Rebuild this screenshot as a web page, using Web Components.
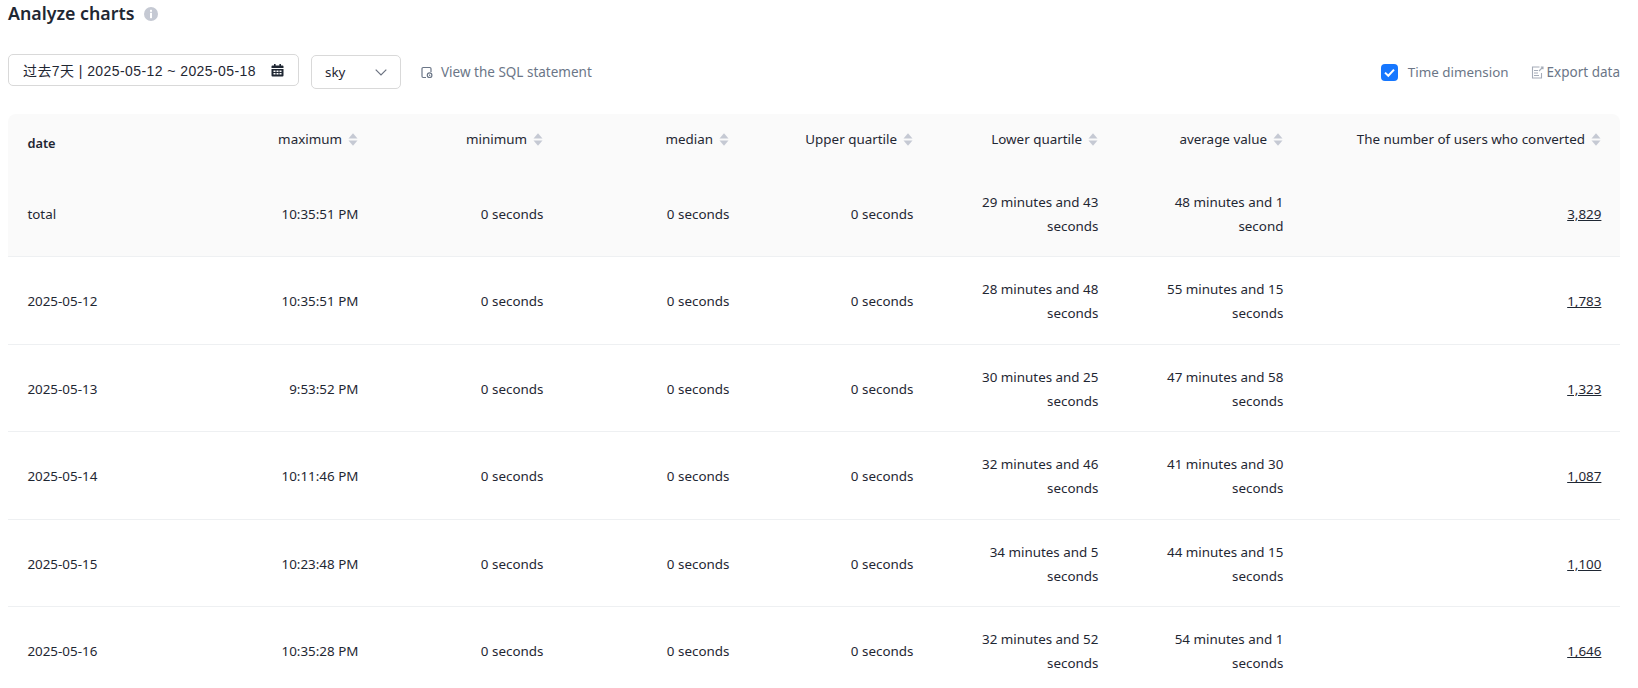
<!DOCTYPE html>
<html><head><meta charset="utf-8"><style>
html,body{margin:0;height:688px;overflow:hidden;background:#fff}
body{font-family:"Noto Sans","Noto Sans CJK SC",sans-serif}
</style></head><body>
<x-page></x-page>
<script>
const sortIcon=`<svg width="10" height="13" viewBox="0 0 10 13"><path d="M5 0.3 9.5 5.6H.5z" fill="#c5c9d3"/><path d="M5 12.7.5 7.4h9z" fill="#c5c9d3"/></svg>`;
const F='13.4px/24px "Noto Sans",sans-serif';
class XTitle extends HTMLElement{constructor(){super();this.attachShadow({mode:'open'}).innerHTML=`<style>
:host{display:flex;align-items:center;gap:10px;height:27px;font:600 17.8px/27px "Noto Sans",sans-serif;color:#1f2733}
svg{display:block;margin-top:1px}</style><slot></slot>
<svg width="14" height="14" viewBox="0 0 14 14"><circle cx="7" cy="7" r="7" fill="#c5c9d3"/><rect x="6" y="2.8" width="2" height="2" fill="#fff"/><rect x="6" y="5.8" width="2" height="5.4" fill="#fff"/></svg>`}}
customElements.define('x-title',XTitle);
class XDate extends HTMLElement{constructor(){super();this.attachShadow({mode:'open'}).innerHTML=`<style>
:host{display:flex;align-items:center;box-sizing:border-box;width:291px;height:32px;padding:0 14px;border:1px solid #d9d9d9;border-radius:5px;font:14px "Liberation Sans","Noto Sans CJK SC",sans-serif;letter-spacing:.42px;color:#1f2733;justify-content:space-between;align-self:flex-start;margin-top:-1px}
svg{display:block;}</style><span><slot></slot></span>
<svg width="13" height="13" viewBox="0 0 13 13" fill="#1f2733"><path d="M3 0h1.6v1.5h3.8V0H10v1.5h1.5A1 1 0 0 1 12.5 2.5V4H.5V2.5a1 1 0 0 1 1-1H3z"/><path fill-rule="evenodd" d="M.5 5h12v6.5a1 1 0 0 1-1 1h-10a1 1 0 0 1-1-1zM2.5 6.5v1.5h2V6.5zm3 0v1.5h2V6.5zm3 0v1.5h2V6.5zM2.5 9v1.5h2V9zm3 0v1.5h2V9zm3 0v1.5h2V9z"/></svg>`}}
customElements.define('x-date',XDate);
class XSelect extends HTMLElement{constructor(){super();this.attachShadow({mode:'open'}).innerHTML=`<style>
:host{display:flex;align-items:center;justify-content:space-between;box-sizing:border-box;width:90px;height:34px;padding:0 13px;border:1px solid #d9d9d9;border-radius:5px;font:${F};color:#1f2733}
svg{display:block}</style><slot></slot>
<svg width="12" height="7" viewBox="0 0 12 7" fill="none" stroke="#6b7280" stroke-width="1.2"><path d="M.7.7 6 6 11.3.7"/></svg>`}}
customElements.define('x-select',XSelect);
class XLink extends HTMLElement{constructor(){super();this.attachShadow({mode:'open'}).innerHTML=`<style>
:host{display:flex;align-items:center;gap:var(--g,8px);font:13.5px/24px "Noto Sans",sans-serif;color:#6b7687}
::slotted(svg){display:block}</style><slot name="icon"></slot><slot></slot>`}}
customElements.define('x-link',XLink);
class XCheck extends HTMLElement{constructor(){super();this.attachShadow({mode:'open'}).innerHTML=`<style>
:host{display:flex;align-items:center;gap:10px;font:${F};color:#6b7687}
i{display:block;width:17px;height:17px;border-radius:4px;background:#1677ff}svg{display:block}</style>
<i><svg width="17" height="17" viewBox="0 0 17 17" fill="none" stroke="#fff" stroke-width="2"><path d="M4 8.6 7.3 11.8 13 5.6"/></svg></i><slot></slot>`}}
customElements.define('x-check',XCheck);
class XToolbar extends HTMLElement{constructor(){super();this.attachShadow({mode:'open'}).innerHTML=`<style>
:host{display:flex;align-items:center;justify-content:space-between;margin-top:28px;height:34px}
div{display:flex;align-items:center}
.l{gap:12px;height:34px}.r{gap:22px}
.l ::slotted(x-link){margin-left:8px}</style>
<div class="l"><slot name="left"></slot></div><div class="r"><slot name="right"></slot></div>`}}
customElements.define('x-toolbar',XToolbar);
const cols='184px 185px 185px 186px 184px 185px 185px 318px';
class XRow extends HTMLElement{constructor(){super();this.attachShadow({mode:'open'}).innerHTML=`<style>
:host{display:grid;grid-template-columns:${cols};align-items:center;box-sizing:border-box;min-height:87.5px;border-bottom:1px solid #eef0f2;font:${F};color:#1f2733}
:host([total]){background:#fafafa;height:87px;min-height:87px}
</style><slot></slot>`}}
customElements.define('x-row',XRow);
class XCell extends HTMLElement{constructor(){super();this.attachShadow({mode:'open'}).innerHTML=`<style>
:host{display:block;padding:2px 18.6px 0 19px;text-align:right}
:host([first]){text-align:left;padding-left:19.4px}
:host([link]){text-decoration:underline}
</style><slot></slot>`}}
customElements.define('x-cell',XCell);
class XHead extends HTMLElement{constructor(){super();this.attachShadow({mode:'open'}).innerHTML=`<style>
:host{display:flex;align-items:center;justify-content:flex-end;gap:6px;padding:0 19px;height:24px;align-self:start;margin-top:13px;font:${F};color:#1f2733}
svg{display:block}</style><slot></slot>${sortIcon}`}}
customElements.define('x-head',XHead);
class XHeader extends HTMLElement{constructor(){super();this.attachShadow({mode:'open'}).innerHTML=`<style>
:host{display:grid;grid-template-columns:${cols};height:56px;background:#fafafa;border-radius:8px 8px 0 0}
.d{padding:17px 19.4px 0;font:600 12.8px/24px "Noto Sans",sans-serif;color:#1f2733}</style>
<div class="d">date</div><slot></slot>`}}
customElements.define('x-header',XHeader);
const data=[['total','10:35:51 PM','29 minutes and 43 seconds','48 minutes and 1 second','3,829'],
['2025-05-12','10:35:51 PM','28 minutes and 48 seconds','55 minutes and 15 seconds','1,783'],
['2025-05-13','9:53:52 PM','30 minutes and 25 seconds','47 minutes and 58 seconds','1,323'],
['2025-05-14','10:11:46 PM','32 minutes and 46 seconds','41 minutes and 30 seconds','1,087'],
['2025-05-15','10:23:48 PM','34 minutes and 5 seconds','44 minutes and 15 seconds','1,100'],
['2025-05-16','10:35:28 PM','32 minutes and 52 seconds','54 minutes and 1 seconds','1,646']];
class XPage extends HTMLElement{constructor(){super();
const heads=['maximum','minimum','median','Upper quartile','Lower quartile','average value','The number of users who converted'];
const rows=data.map((r,i)=>`<x-row ${i?'':'total'}><x-cell first>${r[0]}</x-cell><x-cell>${r[1]}</x-cell><x-cell>0 seconds</x-cell><x-cell>0 seconds</x-cell><x-cell>0 seconds</x-cell><x-cell>${r[2]}</x-cell><x-cell>${r[3]}</x-cell><x-cell link>${r[4]}</x-cell></x-row>`).join('');
this.attachShadow({mode:'open'}).innerHTML=`<style>
:host{display:block;padding:0 18px 0 8px}
x-header{margin-top:25px}</style>
<x-title>Analyze charts</x-title>
<x-toolbar>
<x-date slot="left">过去7天 | 2025-05-12 ~ 2025-05-18</x-date>
<x-select slot="left">sky</x-select>
<x-link slot="left"><svg slot="icon" width="12" height="13" viewBox="0 0 12 13" fill="none" stroke="#6b7687" stroke-width="1.2"><path d="M5 11.5H2.2a1.2 1.2 0 0 1-1.2-1.2V2.7a1.2 1.2 0 0 1 1.2-1.2h6.6a1.2 1.2 0 0 1 1.2 1.2V6"/><circle cx="8.6" cy="9.2" r="2.3"/><path d="M8 8.2l1.6 1L8 10.2z" fill="#6b7687" stroke="none"/></svg>View the SQL statement</x-link>
<x-check slot="right">Time dimension</x-check>
<x-link slot="right" style="--g:3px"><svg slot="icon" width="13" height="13" viewBox="0 0 13 13" fill="none" stroke="#a5acb8" stroke-width="1.1"><path d="M8.5 1H1.5v11h9V7"/><path d="M3 4.5h4M3 7h4M3 9.5h5"/><path d="M8 5l4-4M9.8 1H12v2.2"/></svg>Export data</x-link>
</x-toolbar>
<x-header>${heads.map(h=>`<x-head>${h}</x-head>`).join('')}</x-header>
${rows}`}}
customElements.define('x-page',XPage);
</script></body></html>
